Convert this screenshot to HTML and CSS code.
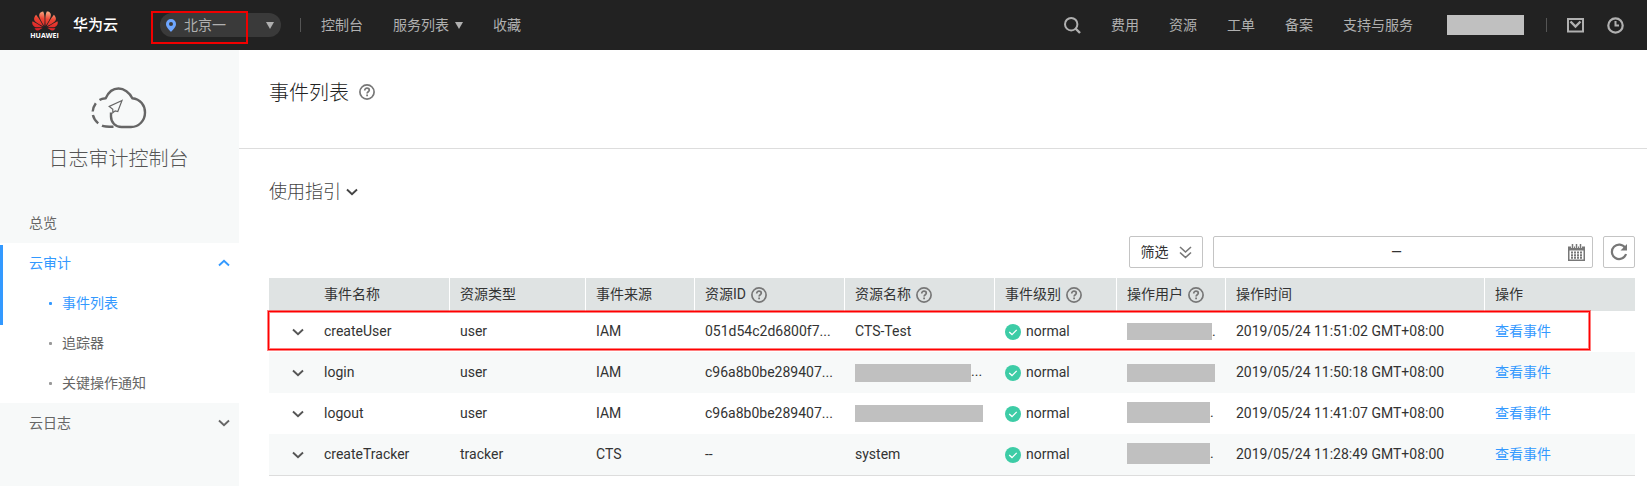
FILE: index.html
```html
<!DOCTYPE html>
<html lang="zh-CN">
<head>
<meta charset="utf-8">
<title>事件列表 - 日志审计控制台</title>
<link rel="stylesheet" href="styles.css">
</head>
<body>
<svg width="0" height="0" class="sprite" aria-hidden="true">
  <symbol id="chevron" viewBox="0 0 12 8"><path d="M1 1.500l5 4.700 5-4.700" fill="none" stroke="currentColor" stroke-width="1.900"/></symbol>
  <symbol id="help" viewBox="0 0 16 16"><circle cx="8" cy="8" r="7.1" fill="none" stroke="currentColor" stroke-width="1.7"/><path d="M5.7 6.5c0-1.5 1-2.3 2.3-2.3s2.3.8 2.3 2c0 1.5-2.2 1.6-2.2 3.3" fill="none" stroke="currentColor" stroke-width="1.7"/><path d="M7.2 10.6h1.8v1.7H7.2z" fill="currentColor"/></symbol>
  <symbol id="ok" viewBox="0 0 16 16"><circle cx="8" cy="8" r="8" fill="#3dcca6"/><path d="M4.2 8l2.8 2.6 4.7-4.7" fill="none" stroke="#fff" stroke-width="1.3"/></symbol>
  <symbol id="caret" viewBox="0 0 8 7"><path d="M0 0h8L4 7z" fill="currentColor"/></symbol>
</svg>

<header class="topbar">
  <a class="brand" href="#">
    <span class="logo">
      <svg width="26" height="20" viewBox="0 2.6 24 18.8" aria-hidden="true">
        <defs><linearGradient id="petal" x1=".62" y1="0" x2=".45" y2="1"><stop offset="0" stop-color="#fbb48a"/><stop offset=".4" stop-color="#ee4433"/><stop offset="1" stop-color="#d91f26"/></linearGradient></defs>
        <path fill="url(#petal)" d="M3.67 6.14S1.82 7.91 1.72 9.78v.35c.08 1.51 1.22 2.4 1.22 2.4 1.83 1.79 6.26 4.04 7.3 4.55 0 0 .06.03.1-.01l.02-.04v-.04C7.52 10.8 3.67 6.14 3.67 6.14zM9.65 18.6c-.02-.08-.1-.08-.1-.08l-7.38.26c.8 1.43 2.15 2.53 3.56 2.2.96-.25 3.16-1.78 3.88-2.3.06-.05.04-.09.04-.09zm.08-.78C6.49 15.63.21 12.28.21 12.28c-.15.46-.2.9-.21 1.3v.07c0 1.07.4 1.82.4 1.82.8 1.69 2.34 2.2 2.34 2.2.7.3 1.4.31 1.4.31.12.02 4.4 0 5.54 0 .05 0 .08-.05.08-.05v-.06c0-.03-.03-.05-.03-.05zM9.06 3.19a3.42 3.42 0 00-2.57 3.15v.41c.03.6.16 1.05.16 1.05.66 2.9 3.86 7.65 4.55 8.65.05.05.1.03.1.03a.1.1 0 00.06-.1c1.06-10.6-1.11-13.42-1.11-13.42-.32.02-1.19.23-1.19.23zm8.299 2.27s-.49-1.8-2.44-2.28c0 0-.57-.14-1.17-.22 0 0-2.18 2.81-1.12 13.43.01.07.06.08.06.08.07.03.1-.03.1-.03.72-1.03 3.9-5.76 4.55-8.64 0 0 .36-1.4.02-2.34zm-2.92 13.07s-.07 0-.09.05c0 0-.01.07.03.1.7.51 2.85 2 3.88 2.3 0 0 .16.05.43.06h.14c.69-.02 1.9-.37 3-2.26l-7.4-.25zm7.83-8.41c.14-2.06-1.94-3.97-1.94-3.98 0 0-3.85 4.66-6.67 10.8 0 0-.03.08.02.13l.04.01h.06c1.06-.53 5.46-2.77 7.28-4.54 0 0 1.15-.93 1.21-2.42zm1.52 2.14s-6.28 3.37-9.52 5.55c0 0-.05.04-.03.11 0 0 .03.06.07.06 1.16 0 5.56 0 5.67-.02 0 0 .57-.02 1.27-.29 0 0 1.56-.5 2.37-2.27 0 0 .73-1.45.17-3.14z"/>
      </svg>
      <span class="logo-word">HUAWEI</span>
    </span>
    <span class="brand-name">华为云</span>
  </a>
  <div class="region">
    <svg width="10" height="13" viewBox="0 0 10 13" aria-hidden="true"><path fill="#6ea6ff" fill-rule="evenodd" d="M5 0a5 5 0 0 1 5 5c0 3.200-3 5.500-5 8C3 10.500 0 8.200 0 5a5 5 0 0 1 5-5zm0 3a2 2 0 1 0 0 4 2 2 0 0 0 0-4z"/></svg>
    <select class="region-select" aria-label="区域"><option>北京一</option></select>
    <svg class="region-caret" width="8" height="7" aria-hidden="true"><use href="#caret"/></svg>
    <span class="mark mark-region"></span>
  </div>
  <nav class="nav-left">
    <span class="bar"></span>
    <a href="#">控制台</a>
    <a class="with-caret" href="#">服务列表<svg width="8" height="7" aria-hidden="true"><use href="#caret"/></svg></a>
    <a href="#">收藏</a>
  </nav>
  <nav class="nav-right">
    <button class="icon-btn" aria-label="搜索"><svg width="17" height="17" viewBox="0 0 17 17"><circle cx="7.200" cy="7.200" r="6.200" fill="none" stroke="currentColor" stroke-width="2"/><path d="M11.500 11.500l4.500 4.500" stroke="currentColor" stroke-width="2.400"/></svg></button>
    <a href="#">费用</a>
    <a href="#">资源</a>
    <a href="#">工单</a>
    <a href="#">备案</a>
    <a href="#">支持与服务</a>
    <span class="mask mask-account"></span>
    <span class="bar"></span>
    <button class="icon-btn" aria-label="消息"><svg width="17" height="15" viewBox="0 0 17 15"><rect x="1" y="1" width="15" height="12.500" fill="none" stroke="currentColor" stroke-width="2"/><path d="M3.500 3.500l5 5 5-5" fill="none" stroke="currentColor" stroke-width="2.400"/></svg></button>
    <button class="icon-btn" aria-label="历史"><svg width="17" height="17" viewBox="0 0 17 17"><circle cx="8.500" cy="8.500" r="7.200" fill="none" stroke="currentColor" stroke-width="2.200"/><path d="M8.500 4v4.500h3.500" fill="none" stroke="currentColor" stroke-width="2"/></svg></button>
  </nav>
</header>

<div class="layout">
  <aside class="sidebar">
    <div class="console">
      <svg width="56" height="42" viewBox="0 0 56 42" fill="none" stroke="#666" aria-hidden="true">
        <path stroke-width="2.400" d="M8.500 13c2-1.300 3.500-1.500 6.200-1.800C17.500 5 22 1.500 27.500 1.500s11 4 13.800 9.700C49.500 12 54 18.500 54 25.500c0 8-6 14.500-14 14.500h-9.500c-6 0-10.500-4.500-10.500-10.500v-4"/>
        <path stroke-width="2.400" d="M4.800 16.200C3.300 18.300 2 21 1.700 24.500M1.900 28c.8 3.500 2.600 6 5.300 8.300M11 38.600c2 1 6 1.100 11.500 1.100"/>
        <path stroke-width="1.200" d="M31 13.500L18.200 19.500l3.600 2.800v3.500l2.400-2 2.600.7z"/>
      </svg>
      <h2 class="console-title">日志审计控制台</h2>
    </div>
    <nav class="menu">
      <a class="menu-item" href="#">总览</a>
      <div class="menu-group">
        <a class="menu-item is-active" href="#">云审计<svg class="flip" width="12" height="8" aria-hidden="true"><use href="#chevron"/></svg></a>
        <a class="menu-item sub is-active" href="#">事件列表</a>
        <a class="menu-item sub" href="#">追踪器</a>
        <a class="menu-item sub" href="#">关键操作通知</a>
      </div>
      <a class="menu-item" href="#">云日志<svg width="12" height="8" aria-hidden="true"><use href="#chevron"/></svg></a>
    </nav>
  </aside>

  <main class="content">
    <div class="page-head">
      <h1 class="page-title">事件列表</h1>
      <svg class="help" width="16" height="16" aria-hidden="true"><use href="#help"/></svg>
    </div>
    <section class="panel">
      <button class="guide">使用指引<svg width="12" height="8" aria-hidden="true"><use href="#chevron"/></svg></button>
      <div class="toolbar">
        <button class="box filter">筛选<svg width="13" height="13" viewBox="0 0 13 13" fill="none" stroke="#777" stroke-width="1.600" aria-hidden="true"><path d="M1 1l5.500 5L12 1M1 6.500l5.500 5 5.500-5"/></svg></button>
        <div class="box range">
          <input type="text" aria-label="开始时间">
          <span>—</span>
          <input type="text" aria-label="结束时间">
          <svg width="17" height="17" viewBox="0 0 17 17" aria-hidden="true"><path fill="#777" fill-rule="evenodd" d="M0 2.500h17V17H0zM1.500 6.500v9h14v-9z"/><path stroke="#fff" stroke-width="3" d="M4.500 0v4M8.500 0v4M12.500 0v4"/><path stroke="#777" stroke-width="1.500" d="M4.500 0v4M8.500 0v4M12.500 0v4"/><path stroke="#777" stroke-width="2" stroke-dasharray="2 1" d="M3 8.500h11M3 11.200h11M3 13.800h11"/></svg>
        </div>
        <button class="box refresh" aria-label="刷新"><svg width="18" height="18" viewBox="0 0 18 18" fill="none" aria-hidden="true"><path stroke="#777" stroke-width="2.200" d="M15.200 5A7.200 7.200 0 1 0 16 11"/><path fill="#777" d="M17 1v6.500h-6.500z"/></svg></button>
      </div>
      <div class="table-wrap">
        <table class="events">
          <colgroup><col class="c-exp"><col class="c-name"><col class="c-type"><col class="c-src"><col class="c-id"><col class="c-res"><col class="c-level"><col class="c-user"><col class="c-time"><col class="c-op"></colgroup>
          <thead>
            <tr>
              <th class="plain"></th>
              <th>事件名称</th>
              <th>资源类型</th>
              <th>事件来源</th>
              <th>资源ID<svg class="help" width="16" height="16" aria-hidden="true"><use href="#help"/></svg></th>
              <th>资源名称<svg class="help" width="16" height="16" aria-hidden="true"><use href="#help"/></svg></th>
              <th>事件级别<svg class="help" width="16" height="16" aria-hidden="true"><use href="#help"/></svg></th>
              <th>操作用户<svg class="help" width="16" height="16" aria-hidden="true"><use href="#help"/></svg></th>
              <th>操作时间</th>
              <th class="plain">操作</th>
            </tr>
          </thead>
          <tbody>
            <tr>
              <td class="exp"><button aria-label="展开"><svg width="12" height="8"><use href="#chevron"/></svg></button></td>
              <td>createUser</td><td>user</td><td>IAM</td><td>051d54c2d6800f7...</td><td>CTS-Test</td>
              <td><svg class="ok" width="16" height="16" aria-hidden="true"><use href="#ok"/></svg>normal</td>
              <td><span class="mask mask-short w85"></span>.</td>
              <td>2019/05/24 11:51:02 GMT+08:00</td><td><a href="#">查看事件</a></td>
            </tr>
            <tr>
              <td class="exp"><button aria-label="展开"><svg width="12" height="8"><use href="#chevron"/></svg></button></td>
              <td>login</td><td>user</td><td>IAM</td><td>c96a8b0be289407...</td><td><span class="mask mask-mid w116"></span>...</td>
              <td><svg class="ok" width="16" height="16" aria-hidden="true"><use href="#ok"/></svg>normal</td>
              <td><span class="mask mask-mid w88"></span></td>
              <td>2019/05/24 11:50:18 GMT+08:00</td><td><a href="#">查看事件</a></td>
            </tr>
            <tr>
              <td class="exp"><button aria-label="展开"><svg width="12" height="8"><use href="#chevron"/></svg></button></td>
              <td>logout</td><td>user</td><td>IAM</td><td>c96a8b0be289407...</td><td><span class="mask mask-short w128"></span></td>
              <td><svg class="ok" width="16" height="16" aria-hidden="true"><use href="#ok"/></svg>normal</td>
              <td><span class="mask mask-tall w83"></span>.</td>
              <td>2019/05/24 11:41:07 GMT+08:00</td><td><a href="#">查看事件</a></td>
            </tr>
            <tr>
              <td class="exp"><button aria-label="展开"><svg width="12" height="8"><use href="#chevron"/></svg></button></td>
              <td>createTracker</td><td>tracker</td><td>CTS</td><td>--</td><td>system</td>
              <td><svg class="ok" width="16" height="16" aria-hidden="true"><use href="#ok"/></svg>normal</td>
              <td><span class="mask mask-tall w83"></span>.</td>
              <td>2019/05/24 11:28:49 GMT+08:00</td><td><a href="#">查看事件</a></td>
            </tr>
          </tbody>
        </table>
        <span class="mark mark-row"></span>
      </div>
    </section>
  </main>
</div>
</body>
</html>
```
FILE: styles.css
```css
* { box-sizing: border-box; }

body {
  margin: 0;
  min-height: 100vh;
  display: flex;
  flex-direction: column;
  font: 14px/20px Roboto, "Noto Sans CJK SC", sans-serif;
  color: #333;
  background: #fff;
}

a { color: inherit; text-decoration: none; }
h1, h2 { margin: 0; font-weight: 300; }
button, select, input { font: inherit; color: inherit; }
button { padding: 0; border: 0; background: none; cursor: pointer; }
svg { display: block; flex: none; }
.sprite { position: absolute; }

/* top bar */
.topbar {
  display: flex;
  align-items: center;
  height: 50px;
  padding: 0 23px 0 31px;
  background: #222;
  color: #b0b0b0;
}
.brand { display: flex; align-items: center; gap: 15px; width: 129px; color: #fff; }
.logo { display: flex; flex-direction: column; align-items: center; gap: 1px; width: 27px; }
.logo-word { font: bold 7px/8px "Open Sans", sans-serif; }
.brand-name { font-size: 15px; font-weight: 500; }
.region {
  position: relative;
  display: flex;
  align-items: center;
  width: 121px;
  height: 24px;
  padding: 0 7px 0 6px;
  border-radius: 12px;
  background: #3a3a3a;
}
.region-select {
  flex: 1;
  min-width: 0;
  padding: 0 0 0 8px;
  border: 0;
  background: none;
  appearance: none;
}
.bar { width: 1px; height: 14px; background: #555; }
.nav-left { display: flex; align-items: center; gap: 30px; padding-left: 19px; }
.nav-left .bar { margin-right: -10px; }
.with-caret { display: flex; align-items: center; gap: 6px; }
.nav-right { display: flex; align-items: center; gap: 30px; margin-left: auto; }
.icon-btn { display: block; }
.nav-right .bar { margin: 0 -10px 0 -8px; }
.icon-btn + .icon-btn { margin-left: -7px; }

.mask { display: inline-block; vertical-align: middle; background: #c0c0c0; }
.mask-account { width: 77px; height: 20px; margin-left: 4px; }
.mask-short { height: 17px; }
.mask-mid { height: 18px; }
.mask-tall { height: 21px; }
.w83 { width: 83px; }
.w85 { width: 85px; }
.w88 { width: 88px; }
.w116 { width: 116px; }
.w128 { width: 128px; }

/* red call-out frames */
.mark { position: absolute; pointer-events: none; }
.mark-region { left: -9px; top: -2px; width: 97px; height: 33px; border: 2px solid #f00000; }
.mark-row {
  top: 33px;
  left: -1px;
  right: 45px;
  height: 39px;
  border: 1px solid #f00;
  box-shadow: 0 0 0 1px rgba(255, 0, 0, .5), inset 0 0 0 1px rgba(255, 0, 0, .5);
}

/* layout */
.layout { flex: 1; display: flex; }
.sidebar { flex: none; width: 239px; background: #f7f9f9; color: #666; }
.console { display: flex; flex-direction: column; align-items: center; gap: 15px; padding: 37px 2px 29px 0; }
.console-title { font-size: 20px; line-height: 30px; color: #555; }
.menu-item {
  display: flex;
  align-items: center;
  justify-content: space-between;
  height: 40px;
  padding: 0 9px 0 29px;
}
.menu-group { position: relative; background: #fff; }
.menu-group::before {
  content: "";
  position: absolute;
  top: 2px;
  left: 0;
  width: 3px;
  height: 80px;
  background: #3399ff;
}
.sub { justify-content: flex-start; gap: 10px; padding-left: 49px; }
.sub::before { content: ""; width: 3px; height: 3px; border-radius: 1px; background: #999; }
.is-active { color: #3399ff; }
.sub.is-active::before { background: #3399ff; }
.flip { transform: rotate(180deg); }

.content { flex: 1; min-width: 0; }
.page-head {
  display: flex;
  gap: 10px;
  height: 99px;
  padding: 28px 30px 0;
  border-bottom: 1px solid #ddd;
}
.page-title { font-size: 20px; line-height: 30px; color: #222; }
.help { color: #777; }
.page-head .help { margin-top: 6px; }
.panel { padding: 28px 12px 10px 30px; }
.guide { display: flex; align-items: center; gap: 5px; font-size: 18px; line-height: 30px; font-weight: 300; color: #444; }

.toolbar { display: flex; justify-content: flex-end; gap: 10px; padding: 29px 0 10px; }
.box {
  display: flex;
  align-items: center;
  justify-content: center;
  height: 32px;
  border: 1px solid #c4c4c4;
  border-radius: 2px;
  background: #fff;
}
.filter { gap: 10px; width: 74px; }
.range { width: 380px; padding: 0 7px 0 11px; }
.range input { flex: 1; min-width: 0; border: 0; outline: 0; background: none; }
.refresh { width: 32px; }

/* event table */
.table-wrap { position: relative; }
.events { width: 100%; table-layout: fixed; border-collapse: separate; border-spacing: 0; border-bottom: 1px solid #ddd; }
.c-exp { width: 45px; }
.c-name, .c-type { width: 136px; }
.c-src, .c-user { width: 109px; }
.c-id, .c-res, .c-op { width: 150px; }
.c-level { width: 122px; }
.c-time { width: auto; }
.events th, .events td { padding: 0 0 2px 10px; text-align: left; white-space: nowrap; }
.events th { height: 33px; font-weight: 400; background: #dfe3e3; border-right: 1px solid #fff; }
.events th.plain { border-right: 0; }
.events td { height: 41px; }
.events tbody tr:nth-child(even) { background: #f7f9f9; }
.events th .help, .events .ok { display: inline-block; vertical-align: middle; }
.events th .help { margin-left: 5px; }
.events .ok { margin-right: 5px; }
.events .exp { padding: 0 0 0 23px; color: #555; }
.events .exp button { display: block; }
.events a { color: #3399ff; }
```
